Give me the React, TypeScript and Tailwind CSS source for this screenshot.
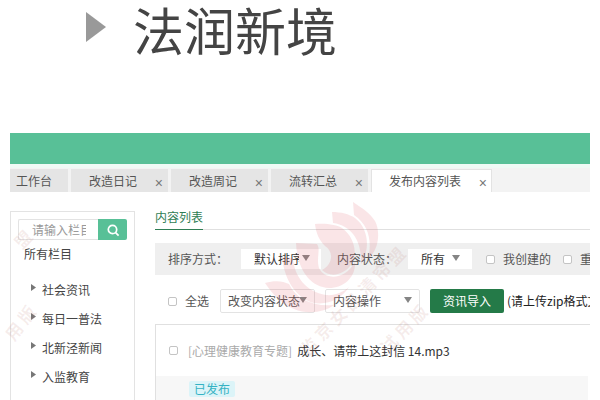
import type { ReactNode } from 'react';

const tabs = ['改造日记', '改造周记', '流转汇总'];
const columns = ['社会资讯', '每日一普法', '北新泾新闻', '入监教育'];

function Caret({ className }: { className: string }) {
    return (
        <svg viewBox="0 0 8 6" className={`pointer-events-none absolute h-1.5 w-2 fill-[#858585] ${className}`}>
            <path d="M0 0h8L4 6z" />
        </svg>
    );
}

function Close({ tab }: { tab: string }) {
    return (
        <button aria-label={`关闭${tab}`} className="pt-1 font-['Liberation_Sans',sans-serif] text-sm leading-4 text-[#777]">
            ×
        </button>
    );
}

function Check({ children, label }: { children?: ReactNode; label?: string }) {
    return (
        <label className="flex shrink-0 items-center gap-2">
            <input
                type="checkbox"
                aria-label={label}
                className="size-[9px] appearance-none rounded-xs border border-[#c4c4c4] bg-white checked:bg-[#58c097]"
            />
            {children}
        </label>
    );
}

function Watermark() {
    return (
        <svg
            viewBox="0 0 600 400"
            aria-hidden="true"
            className="pointer-events-none absolute top-0 left-0 h-[400px] w-[600px]"
        >
            <g fill="#e0606c" fillOpacity="0.16">
                <path d="M353 202C362 208 370 213 375 221C380 230 380 249 368 259C372 243 370 226 354 215Z" />
                <path d="M332 212C341 212 349 214 355 218C368 228 371 248 361 264C362 244 354 226 333 223Z" />
                <path d="M315 224C327 223 337 225 342 228C356 238 358 257 350 266C343 275 330 278 322 270C333 264 334 252 325 246C319 240 316 233 315 224Z" />
                <path d="M296 243L317 244C321 250 316 257 319 268C325 280 344 281 355 262C356 277 344 288 329 288C309 287 297 268 296 243Z" />
                <path d="M282 257L293 258C294 276 306 292 326 295C335 296 343 292 349 287C341 299 329 305 314 303C295 298 284 278 282 257Z" />
                <path d="M265 283C275 280 283 281 289 284C296 299 313 307 334 305C325 312 308 315 294 309C282 304 273 295 265 283Z" />
            </g>
            <g
                fill="#b56a66"
                fillOpacity="0.12"
                fontSize="17"
                fontWeight="700"
                className="font-['Noto_Sans_CJK_SC',sans-serif]"
            >
                <text transform="translate(308 357) rotate(-46)">监 京 女 品 清 帘 盟</text>
                <text transform="translate(388 355) rotate(-46)">试 用 版</text>
                <text transform="translate(22 250) rotate(-46)">盟</text>
                <text transform="translate(14 342) rotate(-52)">用 版</text>
            </g>
        </svg>
    );
}

export default function App() {
    return (
        <div className="relative flex min-h-screen flex-col overflow-hidden bg-white px-2.5 font-['Noto_Sans_CJK_SC',sans-serif] text-xs whitespace-nowrap text-[#555]">
            <h1 className="flex h-[133px] items-start gap-[27px] pl-[76px] text-[51px] leading-[58px] font-normal text-[#444]">
                <svg viewBox="0 0 20 30" className="mt-3 h-[30px] w-5 fill-[#999]">
                    <path d="M0 0L20 15L0 30z" />
                </svg>
                法润新境
            </h1>

            <header className="h-[31px] bg-[#58c097]" />
            <nav className="flex h-7 items-end gap-[3px] border-t-4 border-[#effaf5] bg-[#f3f3f3]">
                <button className="h-[23px] w-[58px] bg-[#e5e5e5] pr-2.5 text-center">工作台</button>
                {tabs.map((tab) => (
                    <div key={tab} className="flex h-[23px] w-[97px] items-center justify-between bg-[#e5e5e5] pr-[5px] pl-[18px]">
                        <button>{tab}</button>
                        <Close tab={tab} />
                    </div>
                ))}
                <div className="flex h-[23px] w-[121px] items-center justify-between border border-b-0 border-[#e3e3e3] bg-white pr-1 pl-[17px]">
                    <button>发布内容列表</button>
                    <Close tab="发布内容列表" />
                </div>
            </nav>

            <div className="flex flex-1 gap-5 pt-[19px]">
                <aside className="w-[125px] shrink-0 border border-b-0 border-[#e3e3e3] px-[7px] pt-[7px] text-[#444]">
                    <form className="flex h-[21px]">
                        <input
                            aria-label="请输入栏目"
                            placeholder="请输入栏目"
                            className="w-[80px] rounded-l-xs border border-r-0 border-[#e3e3e3] pr-3 pl-[13px] placeholder:text-[#999]"
                        />
                        <button type="button" aria-label="搜索" className="flex flex-1 items-center justify-center rounded-r-xs bg-[#58c097]">
                            <svg viewBox="0 0 14 14" className="size-3.5 fill-none stroke-white stroke-[1.7]">
                                <circle cx="6.5" cy="6.5" r="4.2" />
                                <path d="M9.6 9.6L12.6 12.6" />
                            </svg>
                        </button>
                    </form>
                    <h2 className="mt-1 pl-1.5 leading-5">所有栏目</h2>
                    <ul className="mt-[11px] flex flex-col pl-[13px]">
                        {columns.map((column) => (
                            <li key={column} className="flex h-[29px] items-center gap-1.5">
                                <svg viewBox="0 0 5 7" className="mb-1 h-[7px] w-[5px] fill-[#777]">
                                    <path d="M0 0L5 3.5L0 7z" />
                                </svg>
                                <a href="#">{column}</a>
                            </li>
                        ))}
                    </ul>
                </aside>

                <main className="flex min-w-0 flex-1 flex-col">
                    <div className="flex h-[19px] border-b border-[#e0e0e0]">
                        <h2 className="h-[19px] border-b border-[#2f7d54] leading-3 text-[#2f7d54]">内容列表</h2>
                    </div>

                    <div className="mt-[13px] flex h-8 shrink-0 items-center overflow-hidden bg-[#efefef] pl-[13px]">
                        <label htmlFor="sort" className="w-[73px] shrink-0">排序方式：</label>
                        <div className="relative mr-4 w-20 shrink-0">
                            <select id="sort" className="h-5 w-full appearance-none bg-white pr-[22px] pl-[13px] text-[#333]">
                                <option>默认排序</option>
                            </select>
                            <Caret className="top-[6px] right-[11px]" />
                        </div>
                        <label htmlFor="state" className="w-[71px] shrink-0">内容状态：</label>
                        <div className="relative mr-[14px] w-[64px] shrink-0">
                            <select id="state" className="h-5 w-full appearance-none bg-white pr-5 pl-[13px] text-[#333]">
                                <option>所有</option>
                            </select>
                            <Caret className="top-[6px] right-3" />
                        </div>
                        <div className="flex gap-3">
                            <Check>我创建的</Check>
                            <Check>重要的</Check>
                        </div>
                    </div>

                    <div className="mt-3.5 flex h-6 shrink-0 items-center overflow-hidden pl-[13px]">
                        <Check>全选</Check>
                        <div className="relative ml-[11px] w-[95px] shrink-0">
                            <select aria-label="改变内容状态" className="h-6 w-full appearance-none rounded-xs border border-[#e3e3e3] bg-white pl-[7px]">
                                <option>改变内容状态</option>
                            </select>
                            <Caret className="top-2 right-2" />
                        </div>
                        <div className="relative ml-2.5 w-[95px] shrink-0">
                            <select aria-label="内容操作" className="h-6 w-full appearance-none rounded-xs border border-[#e3e3e3] bg-white pl-[7px]">
                                <option>内容操作</option>
                            </select>
                            <Caret className="top-2 right-2" />
                        </div>
                        <button className="ml-2.5 h-6 w-[74px] shrink-0 rounded-xs bg-[#247a48] text-white">资讯导入</button>
                        <span className="ml-[3px] text-[#222]">(请上传zip格式文件)</span>
                    </div>

                    <section className="mt-[11px] flex flex-1 flex-col border-t border-l border-[#e0e0e0]">
                        <div className="flex h-[51px] shrink-0 items-center gap-2.5 pl-[13px]">
                            <Check label="成长、请带上这封信 14.mp3" />
                            <p className="flex gap-[5px]">
                                <span className="text-[#aaa]">[心理健康教育专题]</span>
                                <span className="text-[#333]">成长、请带上这封信 14.mp3</span>
                            </p>
                        </div>
                        <div className="mr-0.5 flex-1 bg-[#f7f7f7] pt-[5px] pl-[33px]">
                            <span className="inline-block rounded-xs bg-[#dcf4f8] px-[5px] leading-4 text-[#35b2c3]">已发布</span>
                        </div>
                    </section>
                </main>
            </div>
            <Watermark />
        </div>
    );
}
